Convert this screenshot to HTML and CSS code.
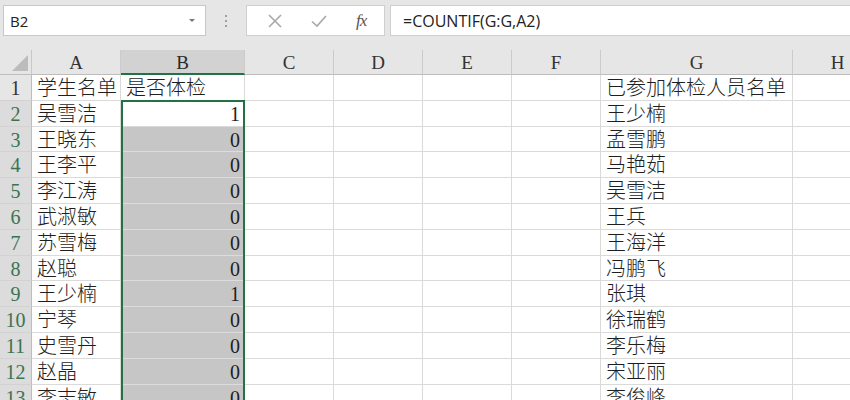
FILE: index.html
```html
<!DOCTYPE html>
<html lang="zh">
<head>
<meta charset="utf-8">
<title>COUNTIF</title>
<link rel="stylesheet" href="styles.css">
</head>
<body>
<div class="app">
  <div class="toolbar">
    <div class="namebox"><span class="ref">B2</span><span class="caret"></span></div>
    <div class="grip"><i></i><i></i><i></i></div>
    <div class="fbtns">
      <svg class="ic" width="16" height="16" viewBox="0 0 16 16"><path d="M2 2 L14 14 M14 2 L2 14" stroke="#a8a8a8" stroke-width="1.6" fill="none"/></svg>
      <svg class="ic" width="18" height="16" viewBox="0 0 18 16"><path d="M2 8.5 L7 13 L16 3" stroke="#a8a8a8" stroke-width="1.6" fill="none"/></svg>
      <span class="fx">fx</span>
    </div>
    <div class="formula">=COUNTIF(G:G,A2)</div>
  </div>
  <div class="sheet">
    <div class="corner"><span class="tri"></span></div>
    <div class="ch">A</div><div class="ch sel">B</div><div class="ch">C</div><div class="ch">D</div><div class="ch">E</div><div class="ch">F</div><div class="ch">G</div><div class="ch">H</div>

    <div class="rh">1</div><div class="c">学生名单</div><div class="c">是否体检</div><div class="c"></div><div class="c"></div><div class="c"></div><div class="c"></div><div class="c">已参加体检人员名单</div><div class="c"></div>
    <div class="rh on">2</div><div class="c">吴雪洁</div><div class="c n act">1</div><div class="c"></div><div class="c"></div><div class="c"></div><div class="c"></div><div class="c">王少楠</div><div class="c"></div>
    <div class="rh on">3</div><div class="c">王晓东</div><div class="c n g">0</div><div class="c"></div><div class="c"></div><div class="c"></div><div class="c"></div><div class="c">孟雪鹏</div><div class="c"></div>
    <div class="rh on">4</div><div class="c">王李平</div><div class="c n g">0</div><div class="c"></div><div class="c"></div><div class="c"></div><div class="c"></div><div class="c">马艳茹</div><div class="c"></div>
    <div class="rh on">5</div><div class="c">李江涛</div><div class="c n g">0</div><div class="c"></div><div class="c"></div><div class="c"></div><div class="c"></div><div class="c">吴雪洁</div><div class="c"></div>
    <div class="rh on">6</div><div class="c">武淑敏</div><div class="c n g">0</div><div class="c"></div><div class="c"></div><div class="c"></div><div class="c"></div><div class="c">王兵</div><div class="c"></div>
    <div class="rh on">7</div><div class="c">苏雪梅</div><div class="c n g">0</div><div class="c"></div><div class="c"></div><div class="c"></div><div class="c"></div><div class="c">王海洋</div><div class="c"></div>
    <div class="rh on">8</div><div class="c">赵聪</div><div class="c n g">0</div><div class="c"></div><div class="c"></div><div class="c"></div><div class="c"></div><div class="c">冯鹏飞</div><div class="c"></div>
    <div class="rh on">9</div><div class="c">王少楠</div><div class="c n g">1</div><div class="c"></div><div class="c"></div><div class="c"></div><div class="c"></div><div class="c">张琪</div><div class="c"></div>
    <div class="rh on">10</div><div class="c">宁琴</div><div class="c n g">0</div><div class="c"></div><div class="c"></div><div class="c"></div><div class="c"></div><div class="c">徐瑞鹤</div><div class="c"></div>
    <div class="rh on">11</div><div class="c">史雪丹</div><div class="c n g">0</div><div class="c"></div><div class="c"></div><div class="c"></div><div class="c"></div><div class="c">李乐梅</div><div class="c"></div>
    <div class="rh on">12</div><div class="c">赵晶</div><div class="c n g">0</div><div class="c"></div><div class="c"></div><div class="c"></div><div class="c"></div><div class="c">宋亚丽</div><div class="c"></div>
    <div class="rh on">13</div><div class="c">李志敏</div><div class="c n g">0</div><div class="c"></div><div class="c"></div><div class="c"></div><div class="c"></div><div class="c">李俊峰</div><div class="c"></div>

    <div class="selbox"></div>
  </div>
</div>
</body>
</html>
```

FILE: styles.css
```css
html, body {
  margin: 0;
  padding: 0;
  background: #ffffff;
  overflow: hidden;
}
.app {
  width: 850px;
  height: 400px;
  overflow: hidden;
  background: #e6e6e6;
}
.toolbar {
  height: 50px;
  box-sizing: border-box;
  padding: 5px 0 0 3px;
  display: flex;
  align-items: flex-start;
  background: #e6e6e6;
}
.namebox {
  width: 203px;
  height: 31px;
  box-sizing: border-box;
  background: #fff;
  border: 1px solid #c8c8c8;
  display: flex;
  align-items: center;
  justify-content: space-between;
  padding: 0 10px 0 6px;
  font: 15px "Open Sans", "Noto Sans", sans-serif;
  color: #222;
}
.caret {
  width: 0;
  height: 0;
  border-left: 3px solid transparent;
  border-right: 3px solid transparent;
  border-top: 3px solid #777;
}
.grip {
  width: 40px;
  height: 31px;
  display: flex;
  flex-direction: column;
  align-items: center;
  justify-content: center;
  gap: 3px;
}
.grip i {
  display: block;
  width: 2px;
  height: 2px;
  background: #a0a0a0;
}
.fbtns {
  width: 139px;
  height: 31px;
  box-sizing: border-box;
  background: #fff;
  border: 1px solid #cfcfcf;
  display: flex;
  align-items: center;
  justify-content: space-around;
  padding: 0 4px 0 6px;
}
.fx {
  font: italic 17px "Liberation Serif", serif;
  color: #555;
  letter-spacing: -1px;
}
.formula {
  margin-left: 5px;
  flex: 1;
  height: 31px;
  box-sizing: border-box;
  background: #fff;
  border: 1px solid #cfcfcf;
  border-right: none;
  padding: 0 12px;
  display: flex;
  align-items: center;
  font: 16px "Open Sans", "Noto Sans", sans-serif;
  color: #222;
}
.sheet {
  position: relative;
  display: grid;
  grid-template-columns: 32px 89px 124px 89px 89px 89px 89px 192px 90px;
  grid-template-rows: 25px repeat(13, 25.8px);
  background: #fff;
}
.sheet > div {
  box-sizing: border-box;
  white-space: nowrap;
  overflow: visible;
}
.corner {
  background: #e6e6e6;
  border-right: 1px solid #c8c8c8;
  border-bottom: 1px solid #bdbdbd;
  position: relative;
}
.tri {
  position: absolute;
  right: 3px;
  bottom: 3px;
  width: 0;
  height: 0;
  border-left: 16px solid transparent;
  border-bottom: 16px solid #bcbcbc;
}
.ch {
  background: #e6e6e6;
  border-right: 1px solid #cbcbcb;
  border-bottom: 1px solid #bdbdbd;
  text-align: center;
  font: 19px/25px "Liberation Serif", serif;
  color: #333;
}
.ch.sel {
  background: #d2d2d2;
  border-bottom: 2px solid #217346;
  color: #2a2a2a;
}
.rh {
  background: #e6e6e6;
  border-right: 1px solid #bdbdbd;
  border-bottom: 1px solid #d2d2d2;
  text-align: center;
  font: 20px/26px "Liberation Serif", serif;
  color: #333;
}
.rh.on {
  background: #dcdcdc;
  color: #3b7351;
}
.c {
  border-right: 1px solid #dadada;
  border-bottom: 1px solid #dadada;
  padding: 0 4px 0 5px;
  font: 300 20px/26px "Liberation Serif", "Noto Sans CJK SC", serif;
  color: #1e1e1e;
}
.c.n {
  text-align: right;
  padding-right: 4px;
}
.c.g {
  background: #c6c6c6;
  border-bottom-color: #dcdcdc;
}
.selbox {
  position: absolute;
  left: 121px;
  top: 50px;
  width: 124px;
  height: 320px;
  box-sizing: border-box;
  border: 2px solid #217346;
  pointer-events: none;
}
```
